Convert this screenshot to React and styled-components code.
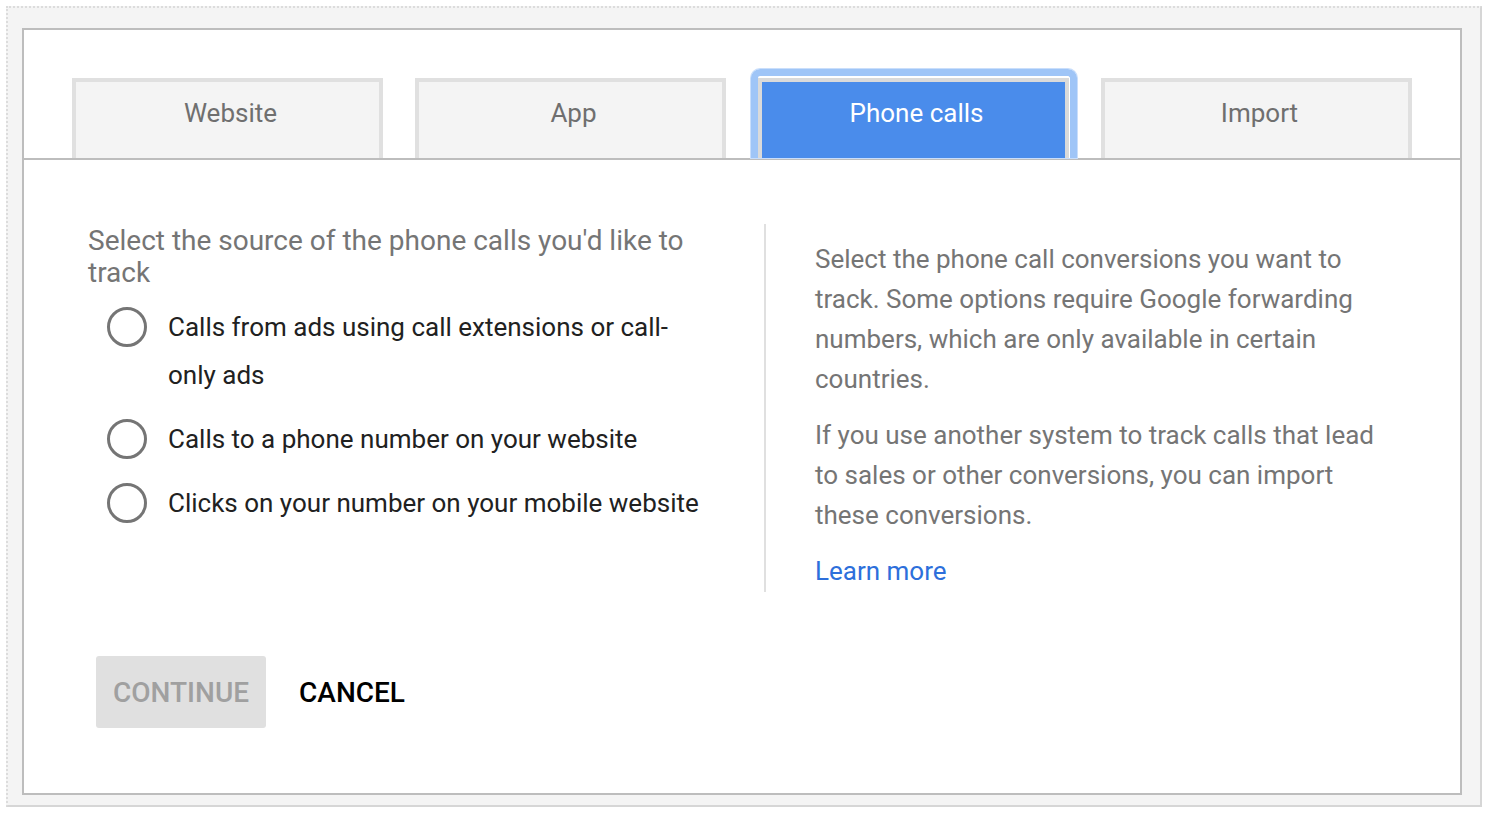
import React from 'react'
import styled, { createGlobalStyle } from 'styled-components'

const GlobalStyle = createGlobalStyle`
  body {
    margin: 0;
    background: #ffffff;
    font-family: Roboto, 'Liberation Sans', Arial, sans-serif;
  }
`

const Page = styled.div`
  padding: 6px 8px 6px 6px;
`

const Frame = styled.div`
  width: 1476px;
  box-sizing: border-box;
  background: #f4f4f4;
  border: 2px dotted #dcdcdc;
  border-right: 2px solid #d6d6d6;
  border-bottom: 2px solid #d6d6d6;
  padding: 20px 18px 10px 14px;
`

const Panel = styled.section`
  background: #ffffff;
  border: 2px solid #bdbdbd;
  padding-top: 48px;
`

const TabBar = styled.nav`
  display: flex;
  gap: 32px;
  padding: 0 48px;
  border-bottom: 2px solid #bdbdbd;
`

const Tab = styled.div`
  position: relative;
  flex: 1;
  height: 80px;
  box-sizing: border-box;
  padding: 15px 0 0 6px;
  border: 4px solid ${p => (p.$active ? '#dadada' : '#e0e0e0')};
  border-bottom: none;
  background: ${p => (p.$active ? '#4a8ceb' : '#f4f4f4')};
  color: ${p => (p.$active ? '#ffffff' : '#6f6f6f')};
  font-size: 26px;
  line-height: 32px;
  text-align: center;

  &::before {
    content: '';
    display: ${p => (p.$active ? 'block' : 'none')};
    position: absolute;
    top: -13px;
    left: -11px;
    right: -12px;
    bottom: 0;
    border: 7px solid #9fc5f7;
    border-bottom: none;
    border-radius: 9px 9px 0 0;
    box-shadow: 0 0 0 1px #c9defb;
  }
`

const Body = styled.div`
  padding: 64px 64px 65px 64px;
`

const Columns = styled.div`
  display: flex;
  align-items: stretch;
`

const LeftCol = styled.div`
  width: 620px;
  margin-right: 56px;
`

const Divider = styled.div`
  width: 2px;
  background: #e0e0e0;
  margin-right: 49px;
`

const RightCol = styled.div`
  width: 566px;
  padding: 15px 0 1px;
`

const Heading = styled.h2`
  margin: 0 0 14px;
  padding-top: 1px;
  font-size: 28px;
  font-weight: 400;
  line-height: 32px;
  color: #757575;
`

const RadioList = styled.div`
  display: flex;
  flex-direction: column;
  gap: 16px;
  padding-left: 19px;
`

const RadioRow = styled.label`
  display: flex;
  align-items: flex-start;
  gap: 21px;
  font-size: 26px;
  line-height: 48px;
  color: #212121;
`

const RadioCircle = styled.span`
  flex: none;
  width: 40px;
  height: 40px;
  box-sizing: border-box;
  border: 3.5px solid #757575;
  border-radius: 50%;
  margin-top: 4px;
`

const RadioText = styled.span`
  width: 537px;
`

const Para = styled.p`
  margin: 0 0 16px;
  font-size: 26px;
  line-height: 40px;
  color: #757575;
`

const Link = styled.a`
  display: block;
  font-size: 26px;
  line-height: 40px;
  color: #2d6fdb;
  text-decoration: none;
`

const Actions = styled.div`
  display: flex;
  gap: 16px;
  margin-top: 64px;
  margin-left: 8px;
`

const Button = styled.button`
  height: 72px;
  padding: 0 17px;
  border: none;
  border-radius: 3px;
  background: ${p => (p.$disabled ? '#e0e0e0' : 'transparent')};
  color: ${p => (p.$disabled ? '#a0a0a0' : '#000000')};
  font-family: Roboto, 'Liberation Sans', Arial, sans-serif;
  font-size: 28px;
  font-weight: 500;
  text-transform: uppercase;
  cursor: pointer;
`

const tabs = ['Website', 'App', 'Phone calls', 'Import']

const options = [
  'Calls from ads using call extensions or call-only ads',
  'Calls to a phone number on your website',
  'Clicks on your number on your mobile website',
]

export default function App() {
  return (
    <>
      <GlobalStyle />
      <Page>
        <Frame>
          <Panel>
            <TabBar>
              {tabs.map(t => (
                <Tab key={t} $active={t === 'Phone calls'}>
                  {t}
                </Tab>
              ))}
            </TabBar>
            <Body>
              <Columns>
                <LeftCol>
                  <Heading>
                    Select the source of the phone calls you'd like to track
                  </Heading>
                  <RadioList>
                    {options.map(o => (
                      <RadioRow key={o}>
                        <RadioCircle />
                        <RadioText>{o}</RadioText>
                      </RadioRow>
                    ))}
                  </RadioList>
                </LeftCol>
                <Divider />
                <RightCol>
                  <Para>
                    Select the phone call conversions you want to track. Some
                    options require Google forwarding numbers, which are only
                    available in certain countries.
                  </Para>
                  <Para>
                    If you use another system to track calls that lead to sales
                    or other conversions, you can import these conversions.
                  </Para>
                  <Link href="#">Learn more</Link>
                </RightCol>
              </Columns>
              <Actions>
                <Button $disabled>Continue</Button>
                <Button>Cancel</Button>
              </Actions>
            </Body>
          </Panel>
        </Frame>
      </Page>
    </>
  )
}
